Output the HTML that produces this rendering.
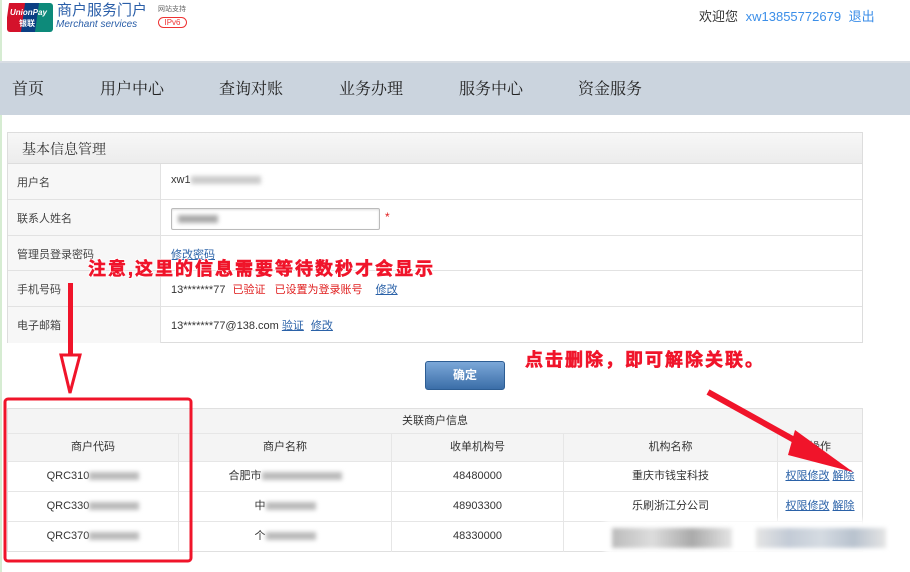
<!DOCTYPE html>
<html><head><meta charset="utf-8"><style>
*{margin:0;padding:0;box-sizing:border-box}
body{width:910px;height:572px;position:relative;background:#fff;font-family:"Liberation Sans","Noto Sans CJK SC",sans-serif;font-size:12px;color:#333;overflow:hidden}
.a{position:absolute}
.nav{left:0;top:61px;width:910px;height:54px;background:#cbd4de;border-top:2px solid #d8dde3}
.nav span{position:absolute;top:13px;font-size:16px;color:#222;font-family:"Noto Serif CJK SC",serif}
.panel{left:7px;top:132px;width:856px;height:211px;border:1px solid #ddd}
.hd{left:0;top:0;width:854px;height:31px;background:linear-gradient(#f7f7f7,#ececec);border-bottom:1px solid #ddd;font-size:14px;padding:6px 0 0 14px;font-family:"Noto Serif CJK SC",serif}
.row{left:0;width:854px;border-bottom:1px solid #e2e2e2;height:36px}
.row .l{position:absolute;left:0;top:0;width:153px;height:100%;background:#f7f7f7;border-right:1px solid #e2e2e2;padding:10px 0 0 9px;color:#444;font-size:11px}
.row .v{position:absolute;left:163px;top:10px;font-size:11px;white-space:nowrap}
a,.lk{color:#2b62a8;text-decoration:underline}
.blur{display:inline-block;background:#bbb;filter:blur(2px);height:8px;vertical-align:middle}
.t2{left:7px;top:408px;width:856px;height:144px;border:1px solid #e0e0e0}
.cell{position:absolute;text-align:center;font-size:11px;border-right:1px solid #e6e6e6;border-bottom:1px solid #e6e6e6}
.red{color:#e02020}
.big{font-weight:bold;font-size:18px;line-height:20px;color:#f0142a;-webkit-text-stroke:0.6px #f0142a;text-shadow:1px 1px 0 #fff,-1px -1px 0 #fff,1px -1px 0 #fff,-1px 1px 0 #fff,0 0 3px #fff;letter-spacing:2px;white-space:nowrap}
</style></head><body>
<div class="a" style="left:0;top:0;width:2px;height:572px;background:#d6ecd2"></div>
<div class="a" style="left:7px;top:3px;width:46px;height:29px;border-radius:3px;overflow:hidden">
<div class="a" style="left:0;top:0;width:18px;height:29px;background:#d4122b;transform:skewX(-8deg)"></div>
<div class="a" style="left:16px;top:0;width:16px;height:29px;background:#0b3f83;transform:skewX(-8deg)"></div>
<div class="a" style="left:30px;top:0;width:18px;height:29px;background:#0d8a7a;transform:skewX(-8deg)"></div>
<div class="a" style="left:3px;top:5px;color:#fff;font-size:8px;line-height:9px;font-weight:bold;font-style:italic;white-space:nowrap">UnionPay</div>
<div class="a" style="left:12px;top:16px;color:#fff;font-size:8px;line-height:9px;font-weight:bold">银联</div>
</div>
<div class="a" style="left:57px;top:3px;font-size:15px;line-height:16px;color:#2a5ea8;white-space:nowrap">商户服务门户</div>
<div class="a" style="left:56px;top:19px;font-size:10px;line-height:11px;color:#2a5ea8;font-style:italic;white-space:nowrap">Merchant services</div>
<div class="a" style="left:158px;top:6px;font-size:7px;line-height:8px;color:#666">网站支持</div>
<div class="a" style="left:158px;top:17px;width:29px;height:11px;border:1px solid #e33;border-radius:6px;font-size:8px;color:#e33;text-align:center;line-height:9px">IPv6</div>
<div class="a" style="left:699px;top:6px;font-size:13px;color:#333;white-space:nowrap">欢迎您 <span style="color:#3b8ee8;margin-left:4px">xw13855772679</span> <span style="color:#3b8ee8;margin-left:4px">退出</span></div>
<div class="a nav"><span style="left:12px">首页</span><span style="left:100px">用户中心</span><span style="left:219px">查询对账</span><span style="left:339px">业务办理</span><span style="left:459px">服务中心</span><span style="left:578px">资金服务</span></div>
<div class="a panel">
<div class="a hd">基本信息管理</div>
<div class="a row" style="top:31px"><div class="l">用户名</div><div class="v">xw1<span class="blur" style="width:70px;background:#ccc"></span></div></div>
<div class="a row" style="top:67px"><div class="l">联系人姓名</div><div class="a" style="left:163px;top:8px;width:209px;height:22px;border:1px solid #bbb;border-radius:2px;box-shadow:inset 0 1px 2px #ddd"><span class="blur" style="position:absolute;left:6px;top:6px;width:40px;background:#aaa"></span></div><div class="a red" style="left:377px;top:10px">*</div></div>
<div class="a row" style="top:103px;height:35px"><div class="l">管理员登录密码</div><div class="v"><span class="lk">修改密码</span></div></div>
<div class="a row" style="top:138px"><div class="l">手机号码</div><div class="v">13*******77 <span class="red" style="margin-left:4px">已验证</span> <span class="red" style="margin-left:6px">已设置为登录账号</span> <span class="lk" style="margin-left:10px">修改</span></div></div>
<div class="a row" style="top:174px;height:36px;border-bottom:none"><div class="l">电子邮箱</div><div class="v">13*******77@138.com <span class="lk">验证</span> <span class="lk" style="margin-left:4px">修改</span></div></div>
</div>
<div class="a" style="left:425px;top:361px;width:80px;height:29px;border:1px solid #2d5d93;border-radius:3px;background:linear-gradient(#7ba7d8,#3b6ea8);color:#fff;font-size:12px;text-align:center;line-height:27px;font-weight:bold">确定</div>
<div class="a t2">
<div class="cell" style="left:0;top:0;width:854px;height:25px;background:#f4f4f4;line-height:24px;border-right:none">关联商户信息</div>
<div class="cell" style="left:0;top:25px;width:171px;height:28px;background:#f4f4f4;line-height:27px">商户代码</div>
<div class="cell" style="left:171px;top:25px;width:213px;height:28px;background:#f4f4f4;line-height:27px">商户名称</div>
<div class="cell" style="left:384px;top:25px;width:172px;height:28px;background:#f4f4f4;line-height:27px">收单机构号</div>
<div class="cell" style="left:556px;top:25px;width:214px;height:28px;background:#f4f4f4;line-height:27px">机构名称</div>
<div class="cell" style="left:770px;top:25px;width:84px;height:28px;background:#f4f4f4;line-height:27px;border-right:none">操作</div>
<div class="cell" style="left:0;top:53px;width:171px;height:30px;line-height:29px">QRC310<span class="blur" style="width:50px"></span></div>
<div class="cell" style="left:171px;top:53px;width:213px;height:30px;line-height:29px">合肥市<span class="blur" style="width:80px"></span></div>
<div class="cell" style="left:384px;top:53px;width:172px;height:30px;line-height:29px">48480000</div>
<div class="cell" style="left:556px;top:53px;width:214px;height:30px;line-height:29px">重庆市钱宝科技</div>
<div class="cell" style="left:770px;top:53px;width:84px;height:30px;line-height:29px;border-right:none"><span class="lk">权限修改</span> <span class="lk">解除</span></div>
<div class="cell" style="left:0;top:83px;width:171px;height:30px;line-height:29px">QRC330<span class="blur" style="width:50px"></span></div>
<div class="cell" style="left:171px;top:83px;width:213px;height:30px;line-height:29px">中<span class="blur" style="width:50px"></span></div>
<div class="cell" style="left:384px;top:83px;width:172px;height:30px;line-height:29px">48903300</div>
<div class="cell" style="left:556px;top:83px;width:214px;height:30px;line-height:29px">乐刷浙江分公司</div>
<div class="cell" style="left:770px;top:83px;width:84px;height:30px;line-height:29px;border-right:none"><span class="lk">权限修改</span> <span class="lk">解除</span></div>
<div class="cell" style="left:0;top:113px;width:171px;height:30px;line-height:29px;border-bottom:none">QRC370<span class="blur" style="width:50px"></span></div>
<div class="cell" style="left:171px;top:113px;width:213px;height:30px;line-height:29px;border-bottom:none">个<span class="blur" style="width:50px"></span></div>
<div class="cell" style="left:384px;top:113px;width:172px;height:30px;line-height:29px;border-bottom:none">48330000</div>
</div>
<div class="a" style="left:605px;top:520px;width:305px;height:35px;background:#fff;filter:blur(3px)"></div>
<div class="a" style="left:612px;top:528px;width:120px;height:20px;background:linear-gradient(90deg,#bbb,#ddd,#aaa,#e5e5e5);filter:blur(2px)"></div>
<div class="a" style="left:756px;top:528px;width:130px;height:20px;background:linear-gradient(90deg,#e5e5e5,#c3cbd6,#d5dbe2,#b8c2ce,#e5e5e5);filter:blur(2px)"></div>
<div class="a big" style="left:88px;top:259px">注意,这里的信息需要等待数秒才会显示</div>
<div class="a big" style="left:525px;top:350px">点击删除，即可解除关联。</div>
<svg class="a" style="left:0;top:0" width="910" height="572">
<rect x="5" y="399" width="186" height="162" rx="3" fill="none" stroke="#f0142a" stroke-width="3"/>
<rect x="68" y="283" width="5" height="73" fill="#f0142a"/>
<polygon points="61,355 80,355 70,393" fill="#fff" stroke="#f0142a" stroke-width="3"/>
<line x1="708" y1="392" x2="805" y2="446" stroke="#f0142a" stroke-width="6"/>
<polygon points="795,430 853,472 788,455" fill="#f0142a"/>
</svg>
</body></html>
